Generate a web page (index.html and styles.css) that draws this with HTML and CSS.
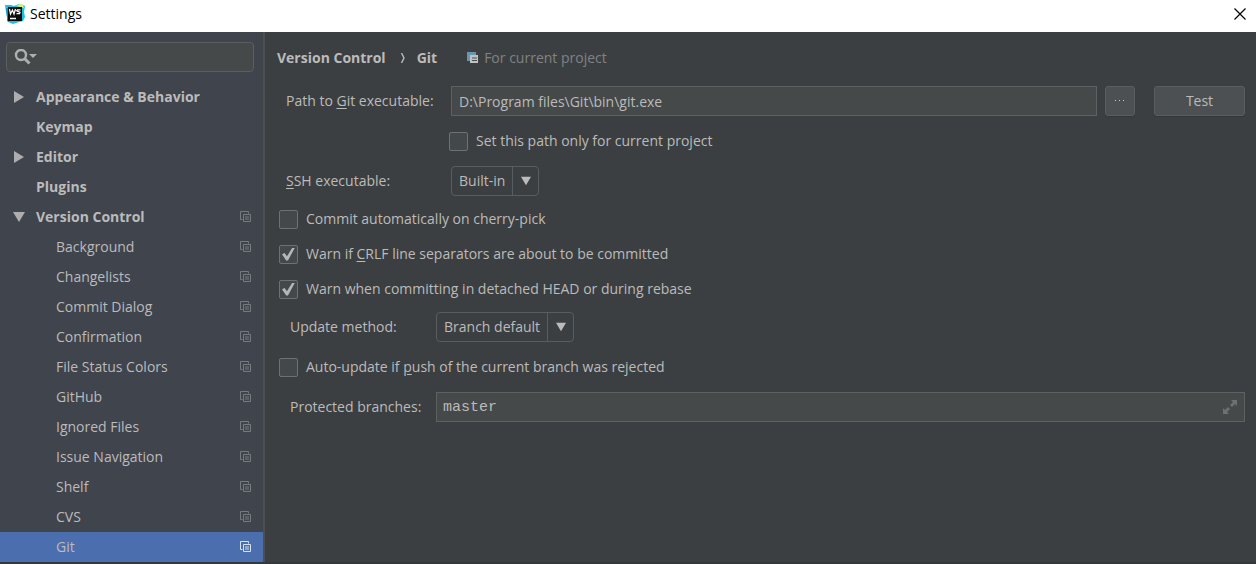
FILE: index.html
```html
<!DOCTYPE html>
<html lang="en">
<head>
<meta charset="utf-8">
<title>Settings</title>
<link rel="stylesheet" href="styles.css">
</head>
<body>
<svg class="defs" aria-hidden="true">
  <symbol id="copy" viewBox="0 0 12 12">
    <path d="M2.500 8.500H.5V.5h8v2M3.500 3.500h7v7h-7zM5 6h4M5 8h4" fill="none" stroke="currentColor"/>
  </symbol>
  <symbol id="right" viewBox="0 0 12 12"><path d="M1 0l10 6-10 6z" fill="currentColor"/></symbol>
  <symbol id="down" viewBox="0 0 12 12"><path d="M0 1h12L6 11z" fill="currentColor"/></symbol>
</svg>
<header class="titlebar">
  <svg class="logo" viewBox="0 0 20 20" aria-hidden="true">
    <path d="M0 1l6 0 3 1 5-2 4 1 2 1-1 6 1 5-2 4-4 1-6 2-5-2-1-5-1-5z" fill="#16c3e3"/>
    <path d="M11 2l4-2 3 1 1 3-4-1z" fill="#e9ee4b"/>
    <path d="M1 4l3 0v14l-2-1 0-4z" fill="#148db8"/>
    <path d="M3 3h14v14H3z" fill="#0c0c0c"/>
    <path d="M4.500 5l1 5L7.500 6l1.500 4 1.500-5M15.500 5.800h-3l-.8 1 3.300 1.500-.5 1.400h-3M5 14.500h6" fill="none" stroke="#fff" stroke-width="1.300"/>
  </svg>
  <h1 class="title">Settings</h1>
  <button class="close" aria-label="Close"><svg viewBox="0 0 12 12"><path d="M.5.5l11 11M11.500.5l-11 11" stroke="#000" stroke-width="1.200"/></svg></button>
</header>
<div class="body">
  <aside class="sidebar">
    <label class="search">
      <svg class="lens" viewBox="0 0 24 16" aria-hidden="true"><circle cx="7" cy="6" r="5" fill="none" stroke="#adafb0" stroke-width="2.400"/><path d="M10.500 9.500l5 5" stroke="#adafb0" stroke-width="3"/><path d="M15 5h8l-4 4z" fill="#adafb0"/></svg>
      <input class="search-input" type="text" aria-label="Search settings">
    </label>
    <nav class="tree">
      <a class="item top" href="#"><svg class="arrow"><use href="#right"/></svg><span class="name">Appearance &amp; Behavior</span></a>
      <a class="item top" href="#"><span class="arrow"></span><span class="name">Keymap</span></a>
      <a class="item top" href="#"><svg class="arrow"><use href="#right"/></svg><span class="name">Editor</span></a>
      <a class="item top" href="#"><span class="arrow"></span><span class="name">Plugins</span></a>
      <a class="item top" href="#"><svg class="arrow"><use href="#down"/></svg><span class="name">Version Control</span><svg class="copy"><use href="#copy"/></svg></a>
      <a class="item sub" href="#"><span class="name">Background</span><svg class="copy"><use href="#copy"/></svg></a>
      <a class="item sub" href="#"><span class="name">Changelists</span><svg class="copy"><use href="#copy"/></svg></a>
      <a class="item sub" href="#"><span class="name">Commit Dialog</span><svg class="copy"><use href="#copy"/></svg></a>
      <a class="item sub" href="#"><span class="name">Confirmation</span><svg class="copy"><use href="#copy"/></svg></a>
      <a class="item sub" href="#"><span class="name">File Status Colors</span><svg class="copy"><use href="#copy"/></svg></a>
      <a class="item sub" href="#"><span class="name">GitHub</span><svg class="copy"><use href="#copy"/></svg></a>
      <a class="item sub" href="#"><span class="name">Ignored Files</span><svg class="copy"><use href="#copy"/></svg></a>
      <a class="item sub" href="#"><span class="name">Issue Navigation</span><svg class="copy"><use href="#copy"/></svg></a>
      <a class="item sub" href="#"><span class="name">Shelf</span><svg class="copy"><use href="#copy"/></svg></a>
      <a class="item sub" href="#"><span class="name">CVS</span><svg class="copy"><use href="#copy"/></svg></a>
      <a class="item sub selected" href="#"><span class="name">Git</span><svg class="copy"><use href="#copy"/></svg></a>
    </nav>
  </aside>
  <main class="main">
    <div class="crumbs">
      <h2 class="crumb">Version Control</h2>
      <svg class="chevron" viewBox="0 0 6 10" aria-hidden="true"><path d="M1.500 0l2.500 5-2.500 5" fill="none" stroke="#bbb" stroke-width="1.400"/></svg>
      <h2 class="crumb">Git</h2>
      <span class="scope"><svg class="scope-icon" viewBox="0 0 12 12" aria-hidden="true"><path d="M0 0h9v3H3v6H0z" fill="#6897ad"/><path d="M3 3h8v8H3z" fill="#bfc1c2"/><path d="M5 6h5M5 8.500h5" stroke="#4a4d50"/></svg>For current project</span>
    </div>
    <form class="form">
      <section class="group">
        <div class="row">
          <label class="label wide" for="path">Path to <u>G</u>it executable:</label>
          <input class="field" id="path" type="text" value="D:\Program files\Git\bin\git.exe">
          <button class="button browse" type="button" aria-label="Browse"><svg viewBox="0 0 12 2"><path d="M1 0h1v1H1zM5 0h1v1H5zM9 0h1v1H9z" fill="#ccc"/></svg></button>
          <button class="button test" type="button">Test</button>
        </div>
        <label class="check nested"><input class="box" type="checkbox">Set this path only for current project</label>
        <div class="row">
          <label class="label wide" for="ssh"><u>S</u>SH executable:</label>
          <span class="combo"><select class="select" id="ssh"><option>Built-in</option></select><svg class="drop" viewBox="0 0 12 12"><use href="#down"/></svg></span>
        </div>
      </section>
      <section class="group">
        <label class="check"><input class="box" type="checkbox">Commit automatically on cherry-pick</label>
        <label class="check"><input class="box" type="checkbox" checked><span>Warn if <u>C</u>RLF line separators are about to be committed</span></label>
        <label class="check"><input class="box" type="checkbox" checked>Warn when committing in detached HEAD or during rebase</label>
      </section>
      <section class="group">
        <div class="row inset">
          <label class="label" for="update">Update method:</label>
          <span class="combo"><select class="select" id="update"><option>Branch default</option></select><svg class="drop" viewBox="0 0 12 12"><use href="#down"/></svg></span>
        </div>
        <label class="check"><input class="box" type="checkbox"><span>Auto-update if <u>p</u>ush of the current branch was rejected</span></label>
        <div class="row inset">
          <label class="label" for="protected">Protected branches:</label>
          <span class="expander"><input class="field mono" id="protected" type="text" value="master">
          <button class="expand" type="button" aria-label="Expand"><svg viewBox="0 0 16 16"><path d="M9 1h6v6l-2-2-3 3-2-2 3-3zM7 15H1V9l2 2 3-3 2 2-3 3z" fill="#6b7275"/></svg></button></span>
        </div>
      </section>
    </form>
  </main>
</div>
</body>
</html>
```

FILE: styles.css
```css
* { box-sizing: border-box; }
body {
  margin: 0;
  min-height: 100vh;
  display: flex;
  flex-direction: column;
  background: #3c3f41;
  color: #bbb;
  font: 14px/20px "Open Sans", "Noto Sans", sans-serif;
}
.defs { display: none; }
svg { display: block; }
input, select, button { font: inherit; color: inherit; }
.titlebar {
  display: flex;
  align-items: center;
  height: 32px;
  padding: 0 10px 5px 5px;
  background: #fff;
  color: #000;
}
.logo { width: 20px; height: 20px; }
.title { flex: 1; margin: 0 0 0 5px; font-size: 14px; font-weight: 400; }
.close { padding: 0; border: 0; background: none; }
.close svg { width: 12px; height: 12px; }
.body { flex: 1; display: flex; border-bottom: 2px solid #35383a; }
.sidebar {
  width: 265px;
  flex: none;
  border-right: 2px solid #4f4f51;
  background: #40444d;
}
.search {
  display: flex;
  align-items: center;
  height: 30px;
  margin: 10px 9px 10px 6px;
  padding: 0 7px;
  border: 1px solid #5b5f60;
  border-radius: 4px;
  background: #45494a;
}
.lens { width: 24px; height: 16px; }
.search-input { flex: 1; min-width: 0; border: 0; background: none; outline: 0; }
.item {
  display: flex;
  align-items: center;
  height: 30px;
  padding: 0 11px 0 13px;
  color: #bbb;
  text-decoration: none;
}
.top { font-weight: 700; }
.sub { padding-left: 56px; }
.arrow { width: 12px; height: 12px; margin-right: 11px; color: #adadad; }
.name { flex: 1; }
.copy { width: 12px; height: 12px; color: #747a7e; }
.selected { background: #4b6eaf; }
.selected .copy { color: #d5e2f0; }
.main { flex: 1; min-width: 0; padding: 16px 11px 16px 12px; }
.crumbs { display: flex; align-items: center; height: 20px; margin-bottom: 18px; }
.crumb { margin: 0; font-size: 14px; line-height: 20px; }
.chevron { width: 6px; height: 10px; margin: 0 11px 0 14px; }
.scope { display: flex; align-items: center; gap: 5px; margin-left: 30px; color: #808284; }
.scope-icon { width: 12px; height: 12px; }
.form { display: flex; flex-direction: column; gap: 13px; }
.group { display: flex; flex-direction: column; gap: 15px; }
.row { display: flex; align-items: center; height: 30px; padding-left: 9px; }
.inset { padding-left: 13px; }
.label { width: 146px; flex: none; }
.wide { width: 165px; }
u { text-underline-offset: 2px; }
.field {
  flex: 1;
  min-width: 0;
  height: 30px;
  padding: 0 7px;
  border: 1px solid #5e6162;
  border-radius: 0;
  background: #45494a;
}
.mono { width: 100%; padding: 0 32px 0 6px; font-family: "Liberation Mono", monospace; font-size: 15px; }
.button {
  height: 30px;
  padding: 0;
  border: 1px solid #5a5e60;
  border-radius: 3px;
  background: #4c5052;
  box-shadow: 0 1px 1px #343739;
}
.browse { display: grid; place-items: center; width: 30px; margin: 0 19px 0 8px; }
.browse svg { width: 12px; height: 2px; }
.test { width: 91px; }
.check { display: flex; align-items: center; gap: 8px; height: 20px; padding-left: 2px; align-self: flex-start; }
.nested { padding-left: 172px; }
.box {
  appearance: none;
  display: grid;
  place-items: center;
  width: 19px;
  height: 19px;
  margin: 0;
  border: 1px solid #6e7071;
  border-radius: 2px;
  background: #43494a;
}
.box:checked::before {
  content: "";
  width: 13px;
  height: 13px;
  background: #b4b6b7;
  clip-path: polygon(0 52%, 20% 42%, 38% 68%, 80% 0, 100% 0, 46% 100%, 32% 100%);
}
.combo { position: relative; display: flex; }
.select {
  appearance: none;
  height: 30px;
  padding: 0 32px 0 7px;
  border: 1px solid #5a5d5f;
  border-radius: 4px;
  background: linear-gradient(#5a5d5f, #5a5d5f) right 25px top / 1px 100% no-repeat #3c3f41;
}
.drop { position: absolute; right: 8px; top: 10px; width: 10px; height: 10px; pointer-events: none; }
.expander { position: relative; flex: 1; display: flex; }
.expand { position: absolute; right: 7px; top: 7px; padding: 0; border: 0; background: none; }
.expand svg { width: 16px; height: 16px; }
```
